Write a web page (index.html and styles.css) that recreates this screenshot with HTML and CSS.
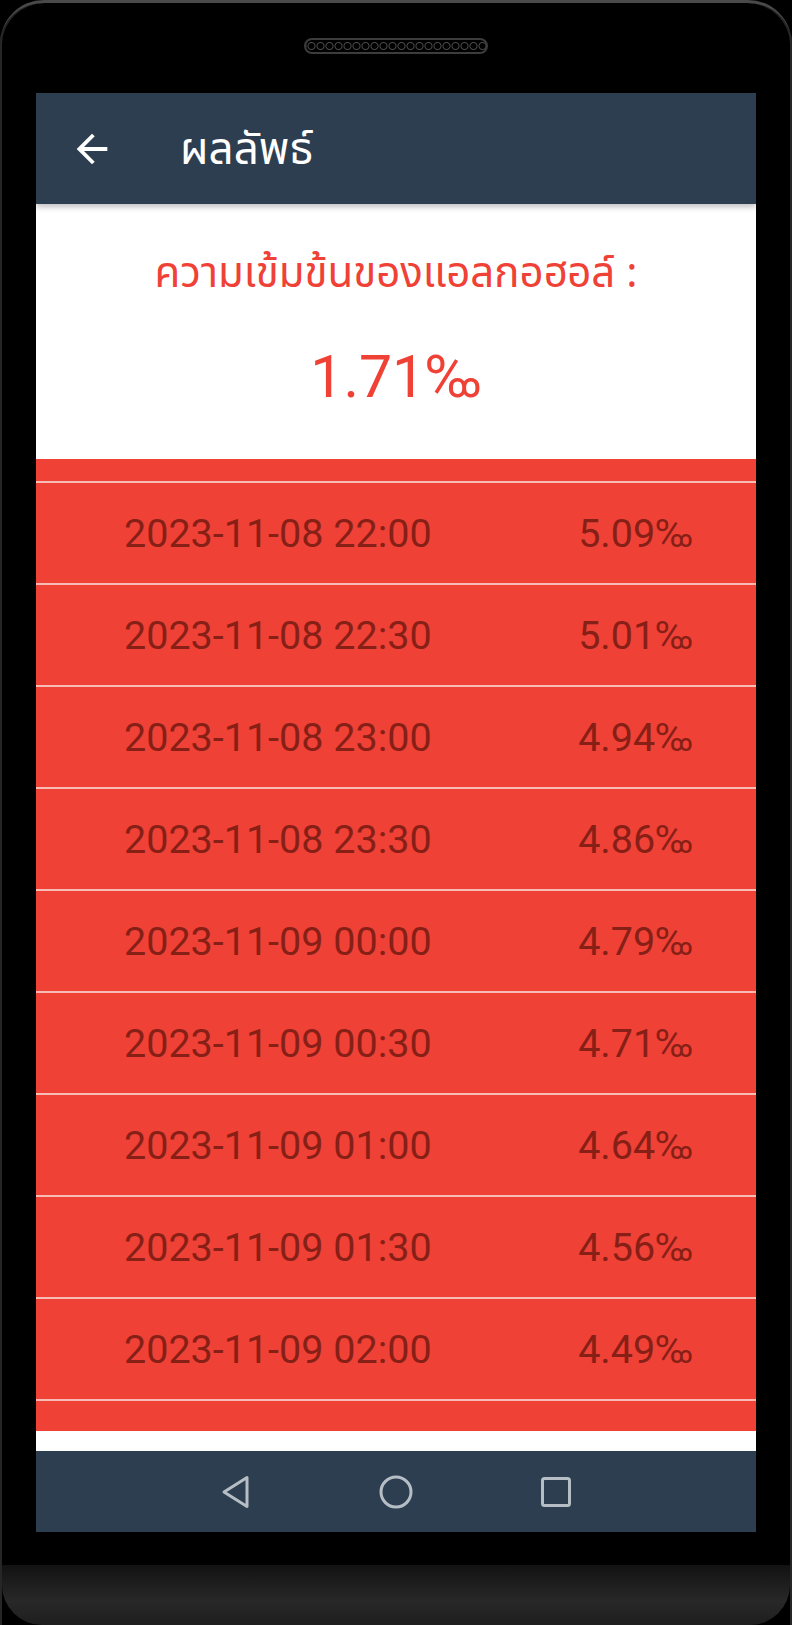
FILE: index.html
```html
<!DOCTYPE html>
<html lang="th">

<head>
  <meta charset="UTF-8">
  <meta name="viewport" content="width=device-width, initial-scale=1.0">
  <title>ผลลัพธ์</title>
  <link rel="stylesheet" href="styles.css">
</head>

<body>
  <div class="phone">
    <div class="top">
      <div class="speaker"></div>
    </div>

    <div class="screen">
      <!-- App bar -->
      <div class="appbar">
        <svg class="back" viewBox="0 0 24 24" width="46" height="46">
          <path d="M20 11H7.83l5.59-5.59L12 4l-8 8 8 8 1.41-1.41L7.83 13H20v-2z" fill="#fff" />
        </svg>
        <span class="title">ผลลัพธ์</span>
      </div>

      <!-- Current result -->
      <div class="summary">
        <div class="label">ความเข้มข้นของแอลกอฮอล์ :</div>
        <div class="value">1.71‰</div>
      </div>

      <!-- History list (scrolled, first and last rows cut off) -->
      <div class="list">
        <ul class="rows">
          <li class="partial"></li>
          <li><span>2023-11-08 22:00</span><span>5.09‰</span></li>
          <li><span>2023-11-08 22:30</span><span>5.01‰</span></li>
          <li><span>2023-11-08 23:00</span><span>4.94‰</span></li>
          <li><span>2023-11-08 23:30</span><span>4.86‰</span></li>
          <li><span>2023-11-09 00:00</span><span>4.79‰</span></li>
          <li><span>2023-11-09 00:30</span><span>4.71‰</span></li>
          <li><span>2023-11-09 01:00</span><span>4.64‰</span></li>
          <li><span>2023-11-09 01:30</span><span>4.56‰</span></li>
          <li><span>2023-11-09 02:00</span><span>4.49‰</span></li>
          <li class="partial"></li>
        </ul>
      </div>

      <!-- Android nav bar -->
      <div class="navbar">
        <div class="nav-item">
          <svg viewBox="0 0 32 36" width="32" height="36">
            <path d="M27 3.5 L4 18 L27 32.5 Z" fill="none" stroke="#b6bdc4" stroke-width="3" stroke-linejoin="round" />
          </svg>
        </div>
        <div class="nav-item">
          <svg viewBox="0 0 36 36" width="36" height="36">
            <circle cx="18" cy="18" r="15" fill="none" stroke="#b6bdc4" stroke-width="3" />
          </svg>
        </div>
        <div class="nav-item">
          <svg viewBox="0 0 34 34" width="34" height="34">
            <rect x="3.5" y="3.5" width="27" height="27" rx="2" fill="none" stroke="#b6bdc4" stroke-width="3" />
          </svg>
        </div>
      </div>
    </div>

    <div class="chin"></div>
  </div>
</body>

</html>
```

FILE: styles.css
```css
html,
body {
  margin: 0;
  background: #000;
}

.phone {
  width: 792px;
  height: 1625px;
  box-sizing: border-box;
  display: flex;
  flex-direction: column;
  background: #000;
  border-radius: 44px 44px 0 0;
  border-top: 3px solid #4a4a4a;
  box-shadow: inset 2px 0 0 #262626, inset -2px 0 0 #262626;
  overflow: hidden;
}

.top {
  height: 90px;
  padding-top: 35px;
  box-sizing: border-box;
  display: flex;
  justify-content: center;
}

.speaker {
  width: 184px;
  height: 16px;
  box-sizing: border-box;
  border: 2px solid #3c3c3c;
  border-radius: 8px;
  background:
    radial-gradient(circle, #000 2.5px, #4a4a4a 3.5px, transparent 4.5px) 1px 0 / 9px 12px repeat-x;
}

.screen {
  margin: 0 36px;
  background: #fff;
  display: flex;
  flex-direction: column;
}

.appbar {
  height: 111px;
  background: #2c3e50;
  display: flex;
  align-items: center;
  position: relative;
  z-index: 1;
  box-shadow: 0 3px 6px rgba(0, 0, 0, 0.25);
}

.back {
  margin-left: 33px;
}

.title {
  margin-left: 65px;
  margin-top: 4px;
  color: #fff;
  font-family: "Noto Sans Thai", "Noto Sans", Roboto, sans-serif;
  font-size: 44px;
}

.summary {
  height: 255px;
  display: flex;
  flex-direction: column;
  align-items: center;
  color: #ef4136;
}

.label {
  margin-top: 38px;
  font-family: "Noto Sans Thai", "Noto Sans", Roboto, sans-serif;
  font-size: 42px;
}

.value {
  margin-top: 36px;
  font-family: Roboto, sans-serif;
  font-size: 59px;
}

.list {
  height: 972px;
  background: #ef4136;
  overflow: hidden;
}

.rows {
  list-style: none;
  margin: -78px 0 0;
  padding: 0;
}

.rows li {
  height: 100px;
  border-bottom: 2px solid #f7bcb6;
  padding: 0 63px 0 88px;
  display: flex;
  justify-content: space-between;
  align-items: center;
  font-family: Roboto, sans-serif;
  font-size: 39.5px;
  color: #861f16;
}

.navbar {
  margin-top: 20px;
  height: 81px;
  background: #2c3e50;
  display: flex;
  justify-content: center;
  align-items: center;
}

.nav-item {
  width: 160px;
  display: flex;
  justify-content: center;
  align-items: center;
}

.chin {
  margin: 33px 2px 0;
  flex: 1;
  border-radius: 0 0 40px 40px;
  background: linear-gradient(#121212, #282828 60%, #1e1e1e);
}
```
